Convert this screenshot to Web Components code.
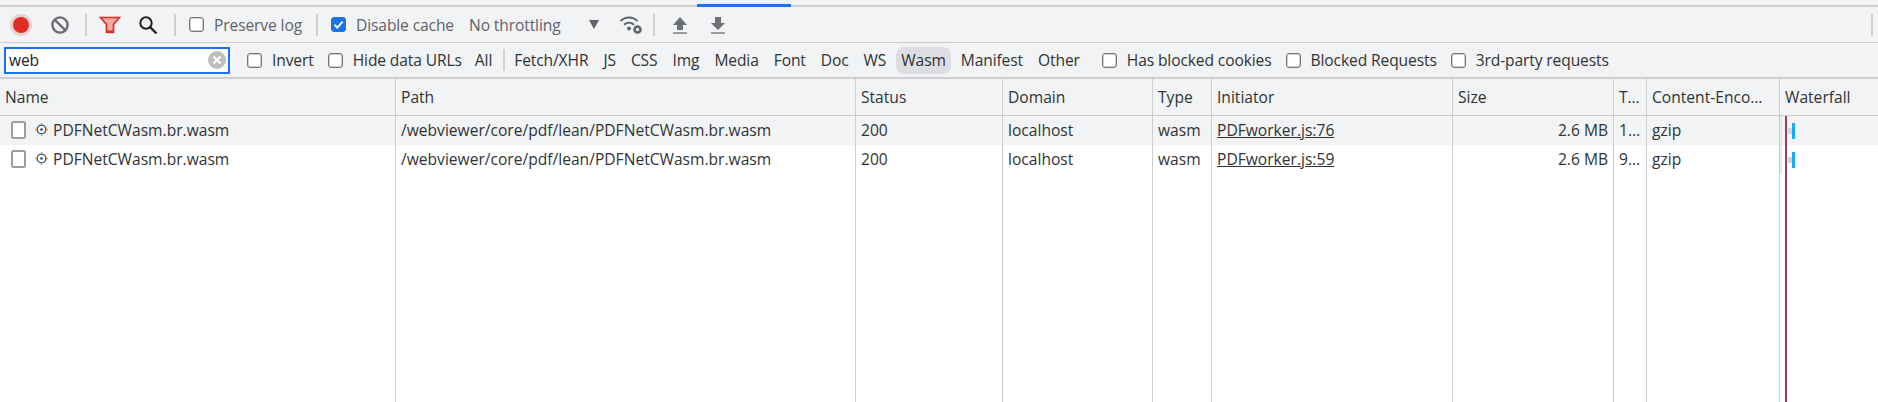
<!DOCTYPE html>
<html>
<head>
<meta charset="utf-8">
<title>Network</title>
<style>
  html, body { margin: 0; height: 100%; background: #fff; overflow: hidden; }
  body { display: flex; flex-direction: column; font: 15.6px "Open Sans", "Noto Sans", sans-serif; color: #303336; }
</style>
</head>
<body>
<dt-tabstrip></dt-tabstrip>
<dt-toolbar></dt-toolbar>
<dt-filterbar></dt-filterbar>
<dt-table></dt-table>

<script>
// small helper so each element only has to write its own template
function shadow(el, html) {
    el.attachShadow({ mode: 'open' });
    el.shadowRoot.innerHTML = html;
}

class DtCheck extends HTMLElement {
    connectedCallback() {
        const on = this.hasAttribute('checked');
        shadow(this, `
            <style>
                :host { display: inline-flex; align-items: center; gap: 10px; white-space: nowrap; }
                .box {
                    width: 13px; height: 13px; border: 1px solid #767676; border-radius: 3px;
                    background: #fff; display: block; box-sizing: content-box;
                    box-shadow: inset 0 0 0 1px rgba(118, 118, 118, .35);
                }
                .box.on { background: #1a73e8; border-color: #1a73e8; box-shadow: none; }
                svg { display: block; width: 13px; height: 13px; }
            </style>
            <span class="box ${on ? 'on' : ''}">
                ${on ? '<svg viewBox="0 0 13 13"><path d="M2.5 6.8 5.3 9.6 10.6 3.6" fill="none" stroke="#fff" stroke-width="2"/></svg>' : ''}
            </span>
            <slot></slot>`);
    }
}
customElements.define('dt-check', DtCheck);

class DtSep extends HTMLElement {
    connectedCallback() {
        shadow(this, `<style>:host { display: block; flex: none; width: 2px; height: 22px; background: #cdcfd2; }</style>`);
    }
}
customElements.define('dt-sep', DtSep);

class DtTabstrip extends HTMLElement {
    connectedCallback() {
        shadow(this, `
            <style>
                :host { display: block; height: 5px; background: #f1f3f4; border-bottom: 2px solid #cbcdd1; position: relative; flex: none; }
                .active { position: absolute; left: 697px; width: 94px; top: 4px; height: 3px; background: #1a73e8; }
            </style>
            <div class="active"></div>`);
    }
}
customElements.define('dt-tabstrip', DtTabstrip);

class DtToolbar extends HTMLElement {
    connectedCallback() {
        shadow(this, `
            <style>
                :host {
                    display: flex; align-items: center; height: 35px; flex: none;
                    background: #f1f3f4; border-bottom: 1px solid #cbcdd1; color: #5f6368;
                    letter-spacing: -0.12px;
                }
                svg { display: block; flex: none; }
                .rec { margin-left: 9px; }
                .clear { margin-left: 17px; }
                .s1 { margin-left: 15px; }
                .filter { margin-left: 12px; }
                .search { margin-left: 17px; }
                .s2 { margin-left: 16px; }
                .preserve { margin-left: 13px; }
                .s3 { margin-left: 14px; }
                .cache { margin-left: 13px; }
                .throttle { margin-left: 15px; width: 95px; white-space: nowrap; }
                .arrow { margin-left: 25px; }
                .wifi { margin-left: 20px; }
                .s4 { margin-left: 10px; }
                .up { margin-left: 17px; }
                .down { margin-left: 22px; }
                .s5 { margin-left: auto; margin-right: 5px; }
            </style>
            <svg class="rec" width="24" height="24" viewBox="0 0 24 24">
                <circle cx="12" cy="12" r="11" fill="#e8a9a4" opacity=".45"/>
                <circle cx="12" cy="12" r="8" fill="#e02d26"/>
            </svg>
            <svg class="clear" width="20" height="20" viewBox="0 0 20 20">
                <circle cx="10" cy="10" r="7.600" fill="none" stroke="#696c70" stroke-width="2.400"/>
                <path d="M4.800 4.800 15.200 15.200" stroke="#696c70" stroke-width="2.400"/>
            </svg>
            <dt-sep class="s1"></dt-sep>
            <svg class="filter" width="22" height="18" viewBox="0 0 22 18">
                <path d="M1.500 1.500H20.500L14.500 8.500V16.500H7.500V8.500Z" fill="#f0a9a2" stroke="#d93025" stroke-width="1.700"/>
                <path d="M7.500 15.500H14.500" stroke="#d93025" stroke-width="2"/>
            </svg>
            <svg class="search" width="20" height="20" viewBox="0 0 20 20">
                <circle cx="8" cy="8" r="5.700" fill="none" stroke="#202124" stroke-width="2"/>
                <path d="M12 12 18.500 18.500" stroke="#202124" stroke-width="2.400"/>
            </svg>
            <dt-sep class="s2"></dt-sep>
            <dt-check class="preserve">Preserve log</dt-check>
            <dt-sep class="s3"></dt-sep>
            <dt-check class="cache" checked>Disable cache</dt-check>
            <span class="throttle">No throttling</span>
            <svg class="arrow" width="10" height="9" viewBox="0 0 10 9"><path d="M0 0H10L5 9Z" fill="#5f6368"/></svg>
            <svg class="wifi" width="24" height="20" viewBox="0 0 24 20">
                <path d="M1.500 6C6.500 1.200 13.500 1.200 18.500 6M5 9.800C8 7 12 7 15 9.800" fill="none" stroke="#5f6368" stroke-width="2"/>
                <circle cx="10" cy="13.500" r="2" fill="#5f6368"/>
                <circle cx="18.500" cy="14.500" r="3" fill="none" stroke="#5f6368" stroke-width="2.600"/>
            </svg>
            <dt-sep class="s4"></dt-sep>
            <svg class="up" width="16" height="20" viewBox="0 0 16 20">
                <path d="M8 2 15 10H11V15H5V10H1Z" fill="#6d7074"/><path d="M1 18H15" stroke="#9a9c9f" stroke-width="2"/>
            </svg>
            <svg class="down" width="16" height="20" viewBox="0 0 16 20">
                <path d="M8 15 1 8H5V2H11V8H15Z" fill="#6d7074"/><path d="M1 18H15" stroke="#9a9c9f" stroke-width="2"/>
            </svg>
            <dt-sep class="s5"></dt-sep>`);
    }
}
customElements.define('dt-toolbar', DtToolbar);

class DtFilterbar extends HTMLElement {
    connectedCallback() {
        const types = ['Fetch/XHR', 'JS', 'CSS', 'Img', 'Media', 'Font', 'Doc', 'WS', 'Wasm', 'Manifest', 'Other'];
        shadow(this, `
            <style>
                :host {
                    display: flex; align-items: center; height: 34px; flex: none;
                    background: #f1f3f4; border-bottom: 2px solid #cbcdd1; color: #303336;
                    letter-spacing: -0.12px;
                }
                .input {
                    margin-left: 4px; width: 226px; height: 27px; box-sizing: border-box;
                    border: 2px solid #1a73e8; background: #fff; display: flex; align-items: center;
                    padding: 0 2px 0 3px; justify-content: space-between; color: #202124;
                }
                svg { display: block; }
                .invert { margin-left: 17px; }
                .hide { margin-left: 14px; }
                .all { margin-left: 13px; }
                dt-sep { margin-left: 11px; margin-right: 4px; }
                .types { display: flex; align-items: center; gap: 5px; }
                .type { padding: 0 5px; height: 27px; line-height: 27px; border-radius: 8px; white-space: nowrap; }
                .type.on { background: #dcdee1; }
                .blocked { margin-left: 17px; }
                .req { margin-left: 14px; }
            </style>
            <div class="input">
                <span>web</span>
                <svg width="18" height="18" viewBox="0 0 18 18">
                    <circle cx="9" cy="9" r="9" fill="#bdbec0"/>
                    <path d="M5.500 5.500 12.500 12.500M12.500 5.500 5.500 12.500" stroke="#fff" stroke-width="2"/>
                </svg>
            </div>
            <dt-check class="invert">Invert</dt-check>
            <dt-check class="hide">Hide data URLs</dt-check>
            <span class="all">All</span>
            <dt-sep></dt-sep>
            <div class="types">
                ${types.map(t => `<span class="type ${t === 'Wasm' ? 'on' : ''}">${t}</span>`).join('')}
            </div>
            <dt-check class="blocked">Has blocked cookies</dt-check>
            <dt-check class="req">Blocked Requests</dt-check>
            <dt-check class="req">3rd-party requests</dt-check>`);
    }
}
customElements.define('dt-filterbar', DtFilterbar);

// one grid line of the table; cells come from the light DOM through slots
class DtRow extends HTMLElement {
    connectedCallback() {
        shadow(this, `
            <style>
                :host {
                    display: grid; flex: none;
                    grid-template-columns: 396px 460px 147px 150px 59px 241px 161px 33px 133px 1fr;
                    height: 29px; background: #fff;
                }
                :host([kind="head"]) { height: 36px; background: #f1f3f4; border-bottom: 1px solid #cbcdd1; }
                :host([kind="odd"]) { background: #f1f3f4; }
                :host([kind="fill"]) { height: auto; flex: 1; }
                ::slotted(*) {
                    border-right: 1px solid #cbcdd1; padding: 0 5px 0 5px; overflow: hidden;
                    white-space: nowrap; display: flex; align-items: center; min-width: 0;
                }
                :host([kind="odd"]) ::slotted(*), :host([kind="body"]) ::slotted(*) { padding-bottom: 2px; }
                ::slotted(:last-child) { border-right: 0; }
                ::slotted(.right) { justify-content: flex-end; }
            </style>
            <slot></slot>`);
    }
}
customElements.define('dt-row', DtRow);

class DtFile extends HTMLElement {
    connectedCallback() {
        shadow(this, `
            <style>
                :host { display: inline-flex; align-items: center; }
                svg { display: block; flex: none; }
                .doc { margin-left: 6px; }
                .gear { margin-left: 9px; margin-right: 5px; }
            </style>
            <svg class="doc" width="15" height="18" viewBox="0 0 15 18">
                <rect x="1" y="1" width="13" height="16" rx="1.500" fill="#fff" stroke="#9a9da1" stroke-width="2"/>
            </svg>
            <svg class="gear" width="13" height="13" viewBox="0 0 13 13">
                <circle cx="6.500" cy="6.500" r="4.300" fill="none" stroke="#34527c" stroke-width="1.300"/>
                <circle cx="6.500" cy="6.500" r="1.300" fill="#274a7a"/>
                <path d="M6.500 0V2M6.500 11V13M0 6.500H2M11 6.500H13" stroke="#e8962e" stroke-width="1.300"/>
            </svg>
            <slot></slot>`);
    }
}
customElements.define('dt-file', DtFile);

class DtBar extends HTMLElement {
    connectedCallback() {
        shadow(this, `
            <style>
                :host { display: block; position: absolute; left: 8px; top: 7px; width: 8px; height: 16px; }
                .wait { position: absolute; left: 0; top: 5px; width: 4px; height: 6px; background: #d4d5d7; }
                .recv { position: absolute; left: 4px; top: 0; width: 3px; height: 16px; background: #10aef5; }
            </style>
            <div class="wait"></div><div class="recv"></div>`);
    }
}
customElements.define('dt-bar', DtBar);

class DtTable extends HTMLElement {
    connectedCallback() {
        const link = 'color:#303336;text-decoration:underline';
        const wf = 'position:relative;padding:0';
        const row = (kind, line) => `
            <dt-row kind="${kind}">
                <div><dt-file>PDFNetCWasm.br.wasm</dt-file></div>
                <div>/webviewer/core/pdf/lean/PDFNetCWasm.br.wasm</div>
                <div>200</div>
                <div>localhost</div>
                <div>wasm</div>
                <div><span style="${link}">PDFworker.js:${line[0]}</span></div>
                <div class="right">2.6 MB</div>
                <div>${line[1]}…</div>
                <div>gzip</div>
                <div style="${wf}"><dt-bar></dt-bar></div>
            </dt-row>`;
        shadow(this, `
            <style>
                :host { display: flex; flex-direction: column; flex: 1; min-height: 0; position: relative; }
                .marker { position: absolute; left: 1785px; top: 37px; bottom: 0; width: 2px; background: #a33a4f; z-index: 1; }
                .shade { position: absolute; left: 1780px; top: 37px; width: 3px; height: 58px; background: linear-gradient(90deg, #dfe0e2, transparent); }
            </style>
            <dt-row kind="head">
                <div>Name</div><div>Path</div><div>Status</div><div>Domain</div><div>Type</div>
                <div>Initiator</div><div>Size</div><div>T…</div><div>Content-Enco…</div><div>Waterfall</div>
            </dt-row>
            ${row('odd', ['76', '1'])}
            ${row('body', ['59', '9'])}
            <dt-row kind="fill">
                <div></div><div></div><div></div><div></div><div></div>
                <div></div><div></div><div></div><div></div><div></div>
            </dt-row>
            <div class="shade"></div>
            <div class="marker"></div>`);
    }
}
customElements.define('dt-table', DtTable);
</script>
</body>
</html>
